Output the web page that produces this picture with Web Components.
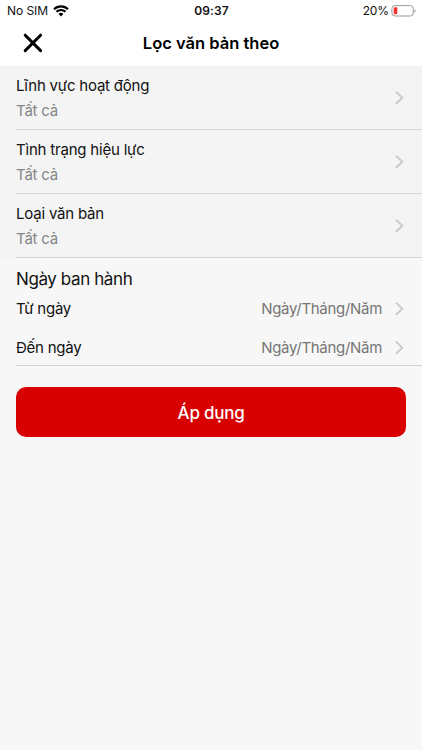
<!DOCTYPE html>
<html lang="vi">
<head>
<meta charset="utf-8">
<meta name="viewport" content="width=device-width, initial-scale=1">
<title>Lọc văn bản theo</title>
<style>
	body {
		margin: 0;
		background: #f7f7f7;
		font-family: Inter, 'Liberation Sans', sans-serif;
		color: #111;
	}
</style>
</head>
<body>
<filter-page></filter-page>
<script>
	function attach(el, html) {
		const template = document.createElement('template');
		template.innerHTML = html;
		const shadowRoot = el.attachShadow({ mode: 'open' });
		shadowRoot.appendChild(template.content.cloneNode(true));
		return shadowRoot;
	}

	window.customElements.define(
		'status-bar',
		class StatusBar extends HTMLElement {
			constructor() {
				super();
				attach(this, `
					<style>
						:host {
							display: grid;
							grid-template-columns: 1fr auto 1fr;
							align-items: center;
							height: 22px;
							padding: 0 6px 0 7px;
							box-sizing: border-box;
							background: #fff;
							font-size: 12px;
							line-height: 22px;
						}
						.left, .right {
							display: flex;
							align-items: center;
						}
						.left {
							gap: 5px;
						}
						.left span {
							letter-spacing: -0.05px;
						}
						.right {
							justify-content: flex-end;
							gap: 2px;
						}
						.right span {
							letter-spacing: -0.1px;
						}
						.right svg {
							margin-right: -1px;
						}
						.time {
							font-weight: 600;
							letter-spacing: 0.1px;
						}
						svg {
							display: block;
						}
					</style>
					<div class="left">
						<span>No SIM</span>
						<svg width="16" height="12" viewBox="0 0 16 12" fill="none" stroke="#000" stroke-width="2.1">
							<path d="M1 4.2a10 10 0 0 1 14 0"/>
							<path d="M3.4 6.8a6.6 6.6 0 0 1 9.2 0"/>
							<path d="M8 11.4 5.6 9a3.4 3.4 0 0 1 4.8 0z" fill="#000" stroke="none"/>
						</svg>
					</div>
					<span class="time">09:37</span>
					<div class="right">
						<span>20%</span>
						<svg width="26" height="12" viewBox="0 0 26 12">
							<rect x="0.9" y="0.6" width="21.4" height="10.4" rx="3" fill="none" stroke="#9b9b9b"/>
							<rect x="2.7" y="2.3" width="3.6" height="7" rx="1" fill="#f5352e"/>
							<path d="M23.6 4.2c1.4.6 1.4 2.8 0 3.4z" fill="#8a8a8a"/>
						</svg>
					</div>
				`);
			}
		}
	);

	window.customElements.define(
		'nav-header',
		class NavHeader extends HTMLElement {
			constructor() {
				super();
				attach(this, `
					<style>
						:host {
							display: grid;
							grid-template-columns: 66px 1fr 66px;
							align-items: center;
							height: 44px;
							padding-bottom: 2px;
							box-sizing: border-box;
							background: #fff;
							color: #000;
						}
						button {
							display: flex;
							justify-content: center;
							padding: 0;
							border: 0;
							background: none;
						}
						h1 {
							margin: 0;
							font-size: 16.5px;
							font-weight: 600;
							line-height: 24px;
							text-align: center;
						}
					</style>
					<button aria-label="Đóng">
						<svg width="20" height="20" viewBox="0 0 20 20" stroke="#000" stroke-width="3" stroke-linecap="round">
							<path d="M2.2 2.2l15.4 15.4M17.6 2.2 2.2 17.6"/>
						</svg>
					</button>
					<h1><slot></slot></h1>
				`);
			}
		}
	);

	window.customElements.define(
		'chevron-icon',
		class ChevronIcon extends HTMLElement {
			constructor() {
				super();
				attach(this, `
					<style>
						:host {
							display: block;
							flex: none;
							width: 10px;
							height: 16px;
						}
						svg {
							display: block;
						}
					</style>
					<svg width="10" height="16" viewBox="0 0 10 16" fill="none" stroke="#c9c9cb" stroke-width="1.9">
						<path d="M2 1.6 8.3 7.7 2 13.8"/>
					</svg>
				`);
			}
		}
	);

	window.customElements.define(
		'filter-row',
		class FilterRow extends HTMLElement {
			constructor() {
				super();
				attach(this, `
					<style>
						:host {
							display: block;
							padding-left: 16px;
							background: #f4f4f4;
						}
						.row {
							display: flex;
							align-items: center;
							justify-content: space-between;
							height: 64px;
							padding-right: 18px;
							box-sizing: border-box;
							border-bottom: 1px solid #d3d3d6;
						}
						.label, .value {
							font-size: 15px;
							line-height: 25px;
							letter-spacing: -0.2px;
						}
						.value {
							color: #858585;
						}
					</style>
					<div class="row">
						<div>
							<div class="label"><slot></slot></div>
							<div class="value"><slot name="value"></slot></div>
						</div>
						<chevron-icon></chevron-icon>
					</div>
				`);
			}
		}
	);

	window.customElements.define(
		'date-row',
		class DateRow extends HTMLElement {
			constructor() {
				super();
				attach(this, `
					<style>
						:host {
							display: flex;
							align-items: center;
							height: 39px;
							padding-right: 18px;
							font-size: 15px;
							line-height: 24px;
							letter-spacing: -0.25px;
						}
						.value {
							margin-left: auto;
							margin-right: 12px;
							color: #757575;
							letter-spacing: -0.3px;
						}
					</style>
					<span><slot></slot></span>
					<span class="value"><slot name="value"></slot></span>
					<chevron-icon></chevron-icon>
				`);
			}
		}
	);

	window.customElements.define(
		'date-section',
		class DateSection extends HTMLElement {
			constructor() {
				super();
				attach(this, `
					<style>
						:host {
							display: block;
							height: 108px;
							margin-left: 16px;
							padding-top: 10px;
							box-sizing: border-box;
							border-bottom: 1px solid #d3d3d6;
						}
						h2 {
							margin: 0;
							font-size: 17px;
							font-weight: 400;
							line-height: 22px;
							height: 21px;
							letter-spacing: -0.4px;
						}
					</style>
					<h2><slot name="heading"></slot></h2>
					<slot></slot>
				`);
			}
		}
	);

	window.customElements.define(
		'apply-button',
		class ApplyButton extends HTMLElement {
			constructor() {
				super();
				attach(this, `
					<style>
						:host {
							display: block;
							margin: 21px 16px 0;
						}
						button {
							display: block;
							width: 100%;
							height: 50px;
							padding: 1px 0 0;
							border: 0;
							border-radius: 10px;
							background: #d80000;
							color: #fff;
							font: 500 17px/50px Inter, 'Liberation Sans', sans-serif;
							letter-spacing: -0.25px;
						}
					</style>
					<button><slot></slot></button>
				`);
			}
		}
	);

	window.customElements.define(
		'filter-page',
		class FilterPage extends HTMLElement {
			constructor() {
				super();
				attach(this, `
					<style>
						:host {
							display: block;
							min-height: 750px;
						}
					</style>
					<status-bar></status-bar>
					<nav-header>Lọc văn bản theo</nav-header>
					<filter-row>Lĩnh vực hoạt động<span slot="value">Tất cả</span></filter-row>
					<filter-row>Tình trạng hiệu lực<span slot="value">Tất cả</span></filter-row>
					<filter-row>Loại văn bản<span slot="value">Tất cả</span></filter-row>
					<date-section>
						<span slot="heading">Ngày ban hành</span>
						<date-row>Từ ngày<span slot="value">Ngày/Tháng/Năm</span></date-row>
						<date-row>Đến ngày<span slot="value">Ngày/Tháng/Năm</span></date-row>
					</date-section>
					<apply-button>Áp dụng</apply-button>
				`);
			}
		}
	);
</script>
</body>
</html>
